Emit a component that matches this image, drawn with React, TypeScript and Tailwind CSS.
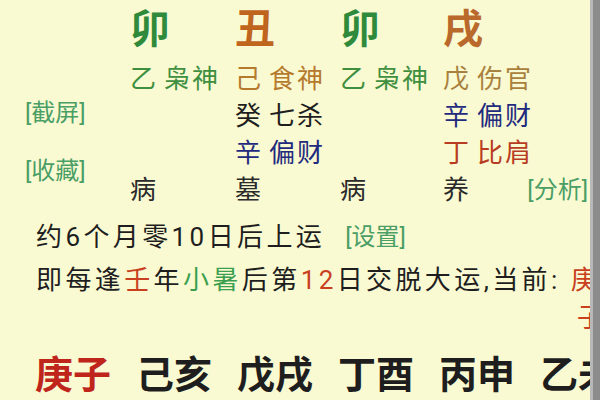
import React from "react";

function Pair({ a, b, cls }: { a: string; b: string; cls: string }) {
  return (
    <div className={`flex items-center gap-[6px] tracking-[2px] ${cls}`}>
      <span>{a}</span>
      <span>{b}</span>
    </div>
  );
}

export default function App() {
  return (
    <div className="w-[600px] h-[400px] flex bg-[#fafad2] overflow-hidden font-['Roboto','Noto_Sans_CJK_SC',sans-serif] text-[#1e1e1e]">
      <div className="w-[590px] h-full overflow-hidden flex flex-col">
        <div className="flex h-[208px]">
          <div className="w-[130px] pl-[25px] pt-[99px] flex flex-col gap-[29px] text-[24px] leading-[29px] text-[#4a9e66]">
            <span>[截屏]</span>
            <span>[收藏]</span>
          </div>
          <div className="flex-1 grid grid-cols-[105px_105px_103px_1fr] grid-rows-[60px_37px_37px_37px_37px] text-[26px] leading-[30px]">
            <div className="flex items-center text-[40px] leading-none font-bold text-[#2f8a3c]">卯</div>
            <div className="flex items-center text-[40px] leading-none font-bold text-[#c0651e]">丑</div>
            <div className="flex items-center text-[40px] leading-none font-bold text-[#2f8a3c]">卯</div>
            <div className="flex items-center text-[40px] leading-none font-bold text-[#b9692c]">戌</div>

            <Pair a="乙" b="枭神" cls="text-[#3f8f40]" />
            <Pair a="己" b="食神" cls="text-[#b57a2e]" />
            <Pair a="乙" b="枭神" cls="text-[#3f8f40]" />
            <Pair a="戊" b="伤官" cls="text-[#a9813e]" />

            <div />
            <Pair a="癸" b="七杀" cls="text-[#1e1e1e]" />
            <div />
            <Pair a="辛" b="偏财" cls="text-[#222a7e]" />

            <div />
            <Pair a="辛" b="偏财" cls="text-[#222a7e]" />
            <div />
            <Pair a="丁" b="比肩" cls="text-[#b83c22]" />

            <div className="flex items-center text-[#2a2a2a]">病</div>
            <div className="flex items-center text-[#2a2a2a]">墓</div>
            <div className="flex items-center text-[#2a2a2a]">病</div>
            <div className="flex items-center text-[#2a2a2a]">
              <span>养</span>
              <span className="ml-auto pr-[2px] text-[24px] text-[#4a9e66]">[分析]</span>
            </div>
          </div>
        </div>

        <div className="mt-[7px] h-[44px] flex items-center pl-[36px] whitespace-nowrap text-[26px] tracking-[3.4px]">
          <span>约6个月零10日后上运</span>
          <span className="ml-[20px] text-[24px] tracking-normal text-[#4a9e66]">[设置]</span>
        </div>

        <div className="h-[42px] flex items-center pl-[36px] whitespace-nowrap text-[26px] tracking-[3.4px]">
          <span>即每逢</span>
          <span className="text-[#c8401e]">壬</span>
          <span>年</span>
          <span className="text-[#3aa050]">小暑</span>
          <span>后第</span>
          <span className="text-[#c8401e]">12</span>
          <span>日交脱大运,当前:</span>
          <span className="ml-[10px] text-[#c8401e]">庚</span>
        </div>

        <div className="h-[34px] flex items-center pl-[577px] whitespace-nowrap text-[26px] text-[#c8401e]">
          <span>子</span>
        </div>

        <div className="mt-[20px] h-[40px] flex items-center gap-[25px] pl-[35px] whitespace-nowrap text-[38px] leading-none font-semibold">
          <span className="text-[#c0251c]">庚子</span>
          <span>己亥</span>
          <span>戊戌</span>
          <span>丁酉</span>
          <span>丙申</span>
          <span>乙未</span>
        </div>
      </div>
      <div className="w-[10px] h-full border-l-[3px] border-[#b8b8b8] bg-[#8c8c8c]" />
    </div>
  );
}
